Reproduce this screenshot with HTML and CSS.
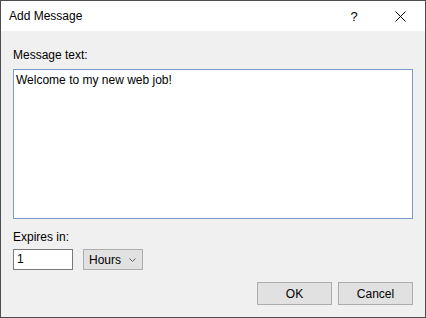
FILE: index.html
```html
<!DOCTYPE html>
<html>
<head>
<meta charset="utf-8">
<link rel="stylesheet" href="styles.css">
</head>
<body>
<div class="window">
  <div class="titlebar">
    <span class="title">Add Message</span>
    <span class="help">?</span>
    <span class="close">
      <svg width="11" height="11" viewBox="0 0 11 11"><path d="M0.5 0.5 L10.5 10.5 M10.5 0.5 L0.5 10.5" stroke="#000" stroke-width="1" fill="none"/></svg>
    </span>
  </div>
  <div class="content">
    <div class="label">Message text:</div>
    <div class="textarea">Welcome to my new web job!</div>
    <div class="label expires">Expires in:</div>
    <div class="row">
      <div class="input">1</div>
      <div class="select">
        <span>Hours</span>
        <svg width="7" height="4" viewBox="0 0 7 4"><path d="M0.5 0.5 L3.5 3.5 L6.5 0.5" stroke="#606060" stroke-width="1" fill="none"/></svg>
      </div>
    </div>
    <div class="buttons">
      <div class="btn">OK</div>
      <div class="btn">Cancel</div>
    </div>
  </div>
</div>
</body>
</html>
```
FILE: styles.css
```css
html, body {
  margin: 0;
  padding: 0;
  background: #f0f0f0;
}
.window {
  width: 426px;
  height: 318px;
  box-sizing: border-box;
  border: 1px solid #4d4d4d;
  background: #f0f0f0;
  font-family: "Liberation Sans", Arial, sans-serif;
  font-size: 12px;
  color: #000;
  display: flex;
  flex-direction: column;
}
.titlebar {
  height: 30px;
  background: #fff;
  display: flex;
  align-items: center;
  flex-shrink: 0;
}
.title {
  padding-left: 8px;
  flex: 1;
  font-size: 12px;
}
.help {
  width: 46px;
  text-align: center;
  font-size: 13px;
  margin-right: 0;
}
.close {
  width: 46px;
  display: flex;
  justify-content: center;
  align-items: center;
  padding-right: 2px;
}
.content {
  padding: 16px 12px 0 12px;
  display: flex;
  flex-direction: column;
}
.label {
  line-height: 16px;
  height: 16px;
}
.textarea {
  margin-top: 6px;
  height: 150px;
  box-sizing: border-box;
  border: 1px solid #7a9ccc;
  background: #fff;
  padding: 2px 2px;
  line-height: 16px;
}
.expires {
  margin-top: 10px;
}
.row {
  margin-top: 4px;
  display: flex;
  gap: 10px;
}
.input {
  width: 60px;
  height: 21px;
  box-sizing: border-box;
  border: 1px solid #7a7a7a;
  background: #fff;
  padding: 2px 3px;
  line-height: 15px;
}
.select {
  width: 60px;
  height: 21px;
  box-sizing: border-box;
  border: 1px solid #adadad;
  background: #e1e1e1;
  display: flex;
  align-items: center;
  justify-content: space-between;
  padding: 0 6px 0 5px;
}
.buttons {
  margin-top: 12px;
  display: flex;
  justify-content: flex-end;
  gap: 6px;
}
.btn {
  width: 75px;
  height: 23px;
  box-sizing: border-box;
  border: 1px solid #adadad;
  background: #e1e1e1;
  display: flex;
  align-items: center;
  justify-content: center;
}
```
